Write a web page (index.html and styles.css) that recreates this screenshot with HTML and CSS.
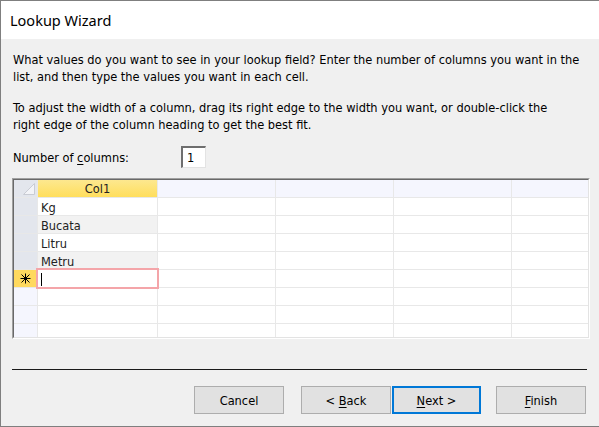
FILE: index.html
```html
<!DOCTYPE html>
<html>
<head>
<meta charset="utf-8">
<link rel="stylesheet" href="styles.css">
</head>
<body>
<div class="window">
  <div class="titlebar">Lookup Wizard</div>
  <div class="content">
    <p class="para">What values do you want to see in your lookup field? Enter the number of columns you want in the<br>list, and then type the values you want in each cell.</p>
    <p class="para second">To adjust the width of a column, drag its right edge to the width you want, or double-click the<br>right edge of the column heading to get the best fit.</p>
    <div class="numrow">
      <span class="numlabel">Number of <u>c</u>olumns:</span>
      <span class="numbox">1</span>
    </div>
    <div class="gridouter">
      <div class="gridinner">
        <div class="grid">
          <div class="c corner"><svg width="23" height="17" viewBox="0 0 23 17"><polygon points="9.5,14.5 20.5,14.5 20.5,3.5" fill="#f3f4f8" stroke="#c9ccd4" stroke-width="1"/></svg></div>
          <div class="c hcur">Col1</div>
          <div class="c h"></div><div class="c h"></div><div class="c h"></div><div class="c h"></div>

          <div class="c sel"></div><div class="c d">Kg</div><div class="c"></div><div class="c"></div><div class="c"></div><div class="c"></div>
          <div class="c sel"></div><div class="c d alt">Bucata</div><div class="c"></div><div class="c"></div><div class="c"></div><div class="c"></div>
          <div class="c sel"></div><div class="c d">Litru</div><div class="c"></div><div class="c"></div><div class="c"></div><div class="c"></div>
          <div class="c sel"></div><div class="c d alt">Metru</div><div class="c"></div><div class="c"></div><div class="c"></div><div class="c"></div>

          <div class="c selnew"><svg width="11" height="11" viewBox="0 0 11 11"><g stroke="#000" stroke-width="1"><line x1="5.5" y1="0.5" x2="5.5" y2="10.5"/><line x1="0.5" y1="5.5" x2="10.5" y2="5.5"/><line x1="1.5" y1="1.5" x2="9.5" y2="9.5"/><line x1="9.5" y1="1.5" x2="1.5" y2="9.5"/></g><rect x="4" y="4" width="3" height="3" fill="#000"/></svg></div>
          <div class="c d edit"><span class="caret"></span></div><div class="c"></div><div class="c"></div><div class="c"></div><div class="c"></div>

          <div class="c selempty"></div><div class="c"></div><div class="c"></div><div class="c"></div><div class="c"></div><div class="c"></div>
          <div class="c selempty"></div><div class="c"></div><div class="c"></div><div class="c"></div><div class="c"></div><div class="c"></div>
          <div class="c selempty"></div><div class="c"></div><div class="c"></div><div class="c"></div><div class="c"></div><div class="c"></div>
          <div class="c selempty"></div><div class="c"></div><div class="c"></div><div class="c"></div><div class="c"></div><div class="c"></div>
        </div>
      </div>
    </div>
    <div class="sep"></div>
    <div class="buttons">
      <button class="btn cancel">Cancel</button>
      <button class="btn back">&lt; <u>B</u>ack</button>
      <button class="btn next"><u>N</u>ext &gt;</button>
      <button class="btn finish"><u>F</u>inish</button>
    </div>
  </div>
</div>
</body>
</html>
```

FILE: styles.css
```css
* { box-sizing: border-box; }
html, body { margin: 0; padding: 0; }
body {
  width: 599px;
  height: 427px;
  overflow: hidden;
  font-family: "DejaVu Sans Condensed", "DejaVu Sans", sans-serif;
  font-size: 12.7px;
  color: #000;
}
.window {
  height: 427px;
  display: flex;
  flex-direction: column;
  border-top: 1px solid #7f7f7f;
  border-left: 1px solid #7f7f7f;
  border-bottom: 1px solid #7f7f7f;
}
.titlebar {
  height: 38px;
  background: #fff;
  padding: 9px 0 0 9px;
  font-family: "Noto Sans", "Open Sans", sans-serif;
  font-size: 14.5px;
  line-height: 20px;
  color: #000;
}
.content {
  flex: 1;
  background: #f0f0f0;
  padding: 12px 0 0 11px;
}
.para {
  margin: 0 0 0 1px;
  width: 586px;
  line-height: 17px;
  white-space: nowrap;
}
.para.second { margin-top: 14px; }
.numrow {
  display: flex;
  align-items: center;
  margin: 13px 0 0 1px;
  height: 22px;
}
.numlabel { width: 168px; }
.numlabel u, .btn u { text-decoration: underline; text-underline-offset: 2px; }
.numbox {
  width: 25px;
  height: 22px;
  background: #fff;
  border-top: 2px solid #6e6e6e;
  border-left: 2px solid #6e6e6e;
  border-right: 1px solid #e3e3e3;
  border-bottom: 1px solid #e3e3e3;
  padding: 2px 0 0 4px;
  line-height: 16px;
}
.gridouter {
  margin-top: 10px;
  width: 578px;
  border-top: 1px solid #a0a0a0;
  border-left: 1px solid #a0a0a0;
  border-right: 1px solid #fff;
  border-bottom: 1px solid #fff;
}
.gridinner {
  border-top: 1px solid #696969;
  border-left: 1px solid #696969;
  border-right: 1px solid #e3e3e3;
  border-bottom: 1px solid #e3e3e3;
  height: 159px;
  overflow: hidden;
  background: #e8e8e8;
}
.grid {
  display: grid;
  grid-template-columns: 23px 119px 117px 117px 117px 76px;
  grid-auto-rows: 17px;
  gap: 1px;
  background: #e8e8e8;
}
.c { background: #fff; line-height: 19px; }
.corner { background: #e3e6ed; }
.corner svg { display: block; }
.hcur {
  background: linear-gradient(#fde88f, #ffde5c);
  text-align: center;
  color: #222;
  line-height: 17px;
}
.h { background: #f5f6fe; }
.sel { background: #e3e6ed; }
.selnew {
  background: #ffd95e;
  display: flex;
  align-items: center;
  justify-content: center;
}
.selnew svg { display: block; }
.selempty { background: #f5f6fe; }
.d { padding-left: 3px; color: #222; }
.alt { background: #f2f2f2; }
.edit {
  position: relative;
  z-index: 1;
  outline: 2px solid #f4a5a9;
  outline-offset: 0px;
  padding-left: 3px;
  padding-top: 3px;
}
.caret {
  display: block;
  width: 1px;
  height: 13px;
  background: #000;
}
.sep {
  margin-top: 30px;
  width: 575px;
  height: 1px;
  background: #1a1a1a;
}
.buttons {
  display: flex;
  margin: 16px 0 0 182px;
}
.btn {
  height: 28px;
  width: 90px;
  background: #e1e1e1;
  border: 1px solid #adadad;
  font-family: "DejaVu Sans Condensed", "DejaVu Sans", sans-serif;
  font-size: 12.7px;
  color: #000;
  padding: 0;
}
.back { margin-left: 17px; }
.next { margin-left: 1px; width: 89px; border: 2px solid #0078d7; }
.finish { margin-left: 15px; }
```
